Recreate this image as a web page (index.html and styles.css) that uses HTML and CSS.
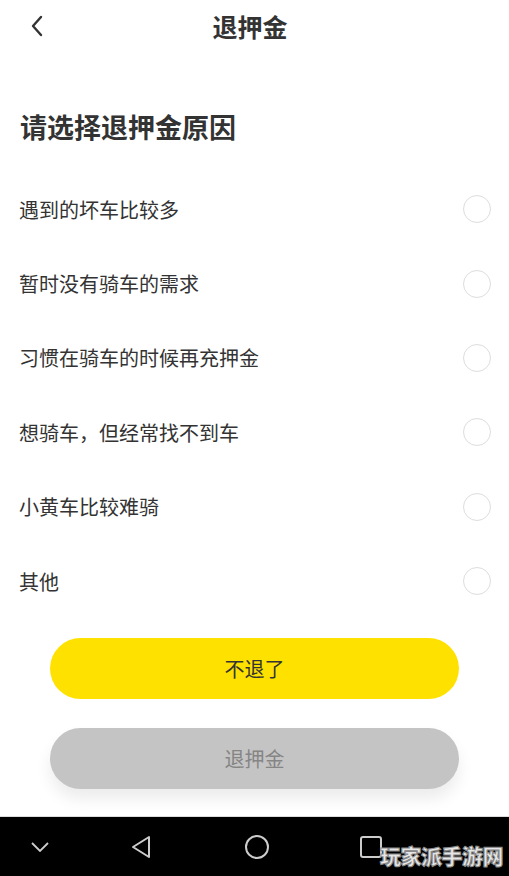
FILE: index.html
```html
<!DOCTYPE html>
<html lang="zh">
<head>
  <meta charset="UTF-8">
  <meta name="viewport" content="width=device-width, initial-scale=1.0">
  <title>退押金</title>
  <link rel="stylesheet" href="styles.css">
</head>
<body>
  <div class="page">
    <div class="topbar">
      <a class="back" href="#">
        <svg viewBox="0 0 14 22" width="14" height="22">
          <polyline points="11,2 3,11 11,20" fill="none" stroke="#333" stroke-width="2.4" stroke-linecap="round" stroke-linejoin="round"/>
        </svg>
      </a>
      <h1 class="title">退押金</h1>
    </div>

    <h2 class="question">请选择退押金原因</h2>

    <ul class="reasons">
      <li><span>遇到的坏车比较多</span><i class="radio"></i></li>
      <li><span>暂时没有骑车的需求</span><i class="radio"></i></li>
      <li><span>习惯在骑车的时候再充押金</span><i class="radio"></i></li>
      <li><span>想骑车，但经常找不到车</span><i class="radio"></i></li>
      <li><span>小黄车比较难骑</span><i class="radio"></i></li>
      <li><span>其他</span><i class="radio"></i></li>
    </ul>

    <div class="actions">
      <button class="btn btn-keep">不退了</button>
      <button class="btn btn-refund">退押金</button>
    </div>
  </div>

  <div class="navbar">
    <svg class="nav-down" viewBox="0 0 18 10" width="18" height="10">
      <polyline points="1,1 9,9 17,1" fill="none" stroke="#ccc" stroke-width="1.8"/>
    </svg>
    <svg class="nav-back" viewBox="0 0 22 24" width="22" height="24">
      <polygon points="19,2 19,22 3,12" fill="none" stroke="#ccc" stroke-width="2" stroke-linejoin="round"/>
    </svg>
    <svg class="nav-home" viewBox="0 0 26 26" width="26" height="26">
      <circle cx="13" cy="13" r="11" fill="none" stroke="#ccc" stroke-width="2"/>
    </svg>
    <svg class="nav-recent" viewBox="0 0 24 24" width="24" height="24">
      <rect x="2" y="2" width="20" height="20" rx="2" fill="none" stroke="#ccc" stroke-width="2"/>
    </svg>
    <span class="watermark">玩家派手游网</span>
  </div>
</body>
</html>
```

FILE: styles.css
```css
* { box-sizing: border-box; }
body { margin: 0; background: #fff; font-family: "Noto Sans CJK SC", "Noto Sans", sans-serif; color: #333; }
.page { height: 817px; border-bottom: 1px solid #ddd; }

.topbar { position: relative; height: 52px; display: flex; align-items: center; justify-content: center; padding-right: 9px; }
.back { position: absolute; left: 30px; top: 15px; display: block; }
.back svg { display: block; }
.title { margin: 0; font-size: 25px; font-weight: bold; line-height: 32px; }

.question { margin: 57px 0 0 20px; font-size: 27px; font-weight: bold; line-height: 36px; }

.reasons { list-style: none; margin: 27px 0 0; padding: 0; }
.reasons li { height: 74.4px; display: flex; align-items: center; justify-content: space-between; padding: 0 18px 0 19px; font-size: 20px; }
.radio { width: 28px; height: 28px; border: 1.5px solid #ddd; border-radius: 50%; }

.actions { padding: 20px 50px 0; display: flex; flex-direction: column; gap: 29px; }
.btn { height: 61px; border: none; border-radius: 31px; font-family: inherit; font-size: 20px; cursor: pointer; }
.btn-keep { background: #ffe100; color: #333; }
.btn-refund { background: #c4c4c4; color: #858585; box-shadow: 0 10px 16px rgba(0, 0, 0, 0.08); }

.navbar { position: relative; height: 59px; background: #000; display: flex; align-items: center; padding-left: 31px; }
.navbar svg { display: block; }
.nav-back { margin-left: 81px; }
.nav-home { margin-left: 92px; }
.nav-recent { margin-left: 89px; }
.watermark { position: absolute; right: 6px; bottom: 6px; font-size: 21px; font-weight: 900; color: #e6e6e6; letter-spacing: -0.5px; -webkit-text-stroke: 1px #888; }
```
